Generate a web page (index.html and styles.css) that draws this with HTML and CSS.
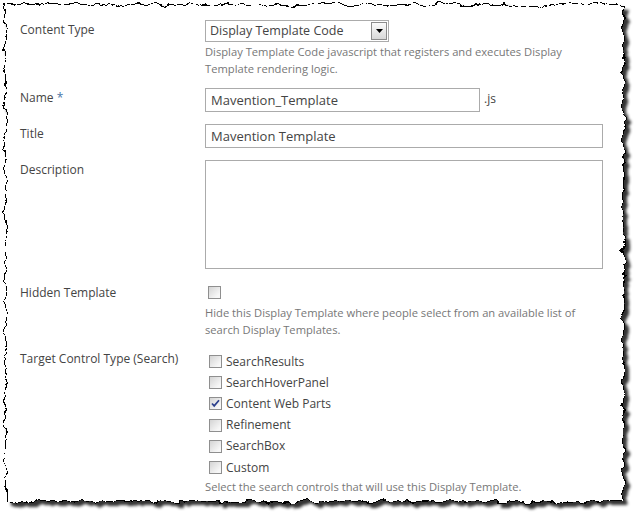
FILE: index.html
```html
<!DOCTYPE HTML>
<html lang="en">
  <head>
  <title>Display Template properties</title>
  <meta charset="utf-8">
  <link rel="stylesheet" href="styles.css">
  </head>

  <body>

  <div id="sheet">

    <svg class="torn" width="640" height="519" viewBox="0 0 640 519">
      <defs>
        <filter id="rough" x="0" y="0" width="640" height="519" filterUnits="userSpaceOnUse">
          <feTurbulence type="fractalNoise" baseFrequency="0.09" numOctaves="5" seed="11" result="noise"/>
          <feDisplacementMap in="SourceGraphic" in2="noise" scale="9" xChannelSelector="R" yChannelSelector="G" result="edge"/>
          <feColorMatrix in="edge" type="matrix" values="0 0 0 0 0  0 0 0 0 0  0 0 0 0 0  0 0 0 0.8 0" result="dark"/>
          <feOffset in="dark" dx="4" dy="4" result="off"/>
          <feGaussianBlur in="off" stdDeviation="1.8" result="shadow"/>
          <feMerge>
            <feMergeNode in="shadow"/>
            <feMergeNode in="edge"/>
          </feMerge>
        </filter>
      </defs>
      <g filter="url(#rough)">
        <rect x="5" y="4" width="619" height="498" fill="#000"/>
        <rect x="6" y="5" width="617" height="496" fill="#fff"/>
      </g>
    </svg>

    <div class="form">

      <div class="row first">
        <div class="label">Content Type</div>
        <div class="field">
          <div class="select">
            <span class="selectText">Display Template Code</span>
            <span class="selectButton">
              <svg width="7" height="4" viewBox="0 0 7 4"><path d="M0 0h7L3.5 4z" fill="#000"/></svg>
            </span>
          </div>
          <div class="desc">Display Template Code javascript that registers and executes Display Template rendering logic.</div>
        </div>
      </div>

      <div class="row name">
        <div class="label">Name <span class="req">*</span></div>
        <div class="field inline">
          <div class="input short">Mavention_Template</div>
          <span class="ext">.js</span>
        </div>
      </div>

      <div class="row">
        <div class="label">Title</div>
        <div class="field">
          <div class="input">Mavention Template</div>
        </div>
      </div>

      <div class="row">
        <div class="label">Description</div>
        <div class="field">
          <div class="textarea"></div>
        </div>
      </div>

      <div class="row hidden">
        <div class="label">Hidden Template</div>
        <div class="field">
          <div class="check"><span class="box"></span></div>
          <div class="desc">Hide this Display Template where people select from an available list of search Display Templates.</div>
        </div>
      </div>

      <div class="row target">
        <div class="label">Target Control Type (Search)</div>
        <div class="field">
          <div class="option"><span class="box"></span>SearchResults</div>
          <div class="option"><span class="box"></span>SearchHoverPanel</div>
          <div class="option"><span class="box"><svg width="9" height="9" viewBox="0 0 9 9"><path d="M1 4.5l2.2 2.4L8 1.2" fill="none" stroke="#2b3f8c" stroke-width="1.7"/></svg></span>Content Web Parts</div>
          <div class="option"><span class="box"></span>Refinement</div>
          <div class="option"><span class="box"></span>SearchBox</div>
          <div class="option"><span class="box"></span>Custom</div>
          <div class="desc">Select the search controls that will use this Display Template.</div>
        </div>
      </div>

    </div>
  </div>

  </body>

</html>
```

FILE: styles.css
```css
html {
  height: 100%;
}
body {
  margin: 0;
  padding: 0;
  background: #ffffff;
  color: #444444;
  font-family: "Open Sans", "Noto Sans", sans-serif;
  font-size: 12px;
  line-height: 18px;
}

#sheet {
  position: relative;
  width: 640px;
  height: 519px;
  overflow: hidden;
}

.torn {
  position: absolute;
  top: 0;
  left: 0;
}

.form {
  position: relative;
  padding: 20px 0 0 20px;
}

.row {
  display: flex;
  margin-top: 12px;
}
.row.first {
  margin-top: 0;
}
.row.name {
  margin-top: 11px;
}

.label {
  width: 185px;
  flex: none;
  padding-top: 1px;
  font-size: 12px;
  color: #444;
}

.req {
  color: #4a76a8;
}

.field {
  width: 398px;
}
.field.inline {
  display: flex;
  align-items: center;
  gap: 4px;
}

/* dropdown */
.select {
  width: 182px;
  height: 20px;
  border: 1px solid #ababab;
  display: flex;
  align-items: center;
  justify-content: space-between;
  font-size: 12.5px;
  color: #444;
}
.selectText {
  padding-left: 4px;
}
.selectButton {
  width: 14px;
  height: 16px;
  margin-right: 1px;
  border: 1px solid #8c8c8c;
  background: linear-gradient(#fafafa, #d8d8d8);
  display: flex;
  align-items: center;
  justify-content: center;
}

.desc {
  font-size: 11.2px;
  line-height: 17px;
  color: #777;
  margin-top: 1px;
}

/* text inputs */
.input {
  height: 22px;
  border: 1px solid #ababab;
  padding: 0 5px;
  font-size: 13px;
  line-height: 22px;
  color: #444;
}
.input.short {
  width: 263px;
}
.ext {
  font-size: 12px;
  color: #444;
  margin-top: -2px;
}

.textarea {
  height: 107px;
  border: 1px solid #ababab;
}

/* checkboxes */
.box {
  width: 11px;
  height: 11px;
  flex: none;
  border: 1px solid #8f8f8f;
  background: linear-gradient(135deg, #d4d4d4, #f7f7f7 80%);
  display: inline-flex;
  align-items: center;
  justify-content: center;
}

.row.hidden {
  margin-top: 14px;
}
.check {
  height: 20px;
  padding: 3px 0 0 3px;
  box-sizing: border-box;
}

.row.target {
  margin-top: 12px;
}
.option {
  height: 21.2px;
  display: flex;
  align-items: center;
  gap: 4px;
  padding-left: 4px;
  font-size: 12px;
  color: #444;
}
.row.target .label {
  padding-top: 0;
}
.row.target .field {
  padding-top: 1px;
}
.row.target .desc {
  margin-top: 0;
}
```
